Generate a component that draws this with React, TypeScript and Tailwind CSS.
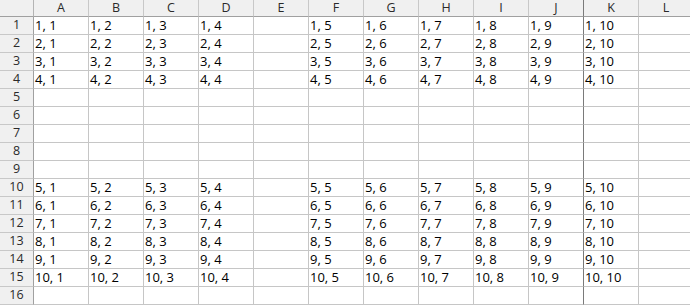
import React from "react";

const cols = ["A", "B", "C", "D", "E", "F", "G", "H", "I", "J", "K", "L"];

function cellText(r: number, c: number): string {
  let dataRow = 0;
  if (r >= 1 && r <= 4) dataRow = r;
  else if (r >= 10 && r <= 15) dataRow = r - 5;
  else return "";
  if (c === 4 || c === 11) return "";
  const colNum = c < 4 ? c + 1 : c;
  return `${dataRow}, ${colNum}`;
}

export default function App() {
  const rows = Array.from({ length: 16 }, (_, i) => i + 1);
  return (
    <div
      className="w-[690px] h-[307px] overflow-hidden bg-white text-black"
      style={{ fontFamily: '"Open Sans", "Noto Sans", sans-serif' }}
    >
      <div className="grid grid-cols-[34px_repeat(12,55px)] w-max">
        <div className="h-[17px] bg-[#f0f0f0] border-r border-b border-r-[#b4b4b4] border-b-[#a0a0a0] box-border" />
        {cols.map((c, i) => (
          <div
            key={c}
            className={`h-[17px] bg-[#f0f0f0] border-b border-b-[#a0a0a0] box-border flex items-center justify-center text-[12.5px] leading-none text-[#2a2a2a] ${
              i === 9 ? "border-r border-r-[#7a7a7a]" : "border-r border-r-[#c8c8c8]"
            }`}
          >
            {c}
          </div>
        ))}
        {rows.map((r) => (
          <React.Fragment key={r}>
            <div className="h-[18px] bg-[#f0f0f0] border-r border-b border-r-[#a0a0a0] border-b-[#c8c8c8] box-border flex items-center justify-center text-[12.5px] leading-none text-[#2a2a2a]">
              {r}
            </div>
            {cols.map((c, i) => (
              <div
                key={c}
                className={`h-[18px] border-b border-b-[#c6c6c6] box-border pl-[1px] flex items-center text-[13px] leading-none whitespace-nowrap overflow-hidden ${
                  i === 9 ? "border-r border-r-[#7a7a7a]" : "border-r border-r-[#c6c6c6]"
                }`}
              >
                {cellText(r, i)}
              </div>
            ))}
          </React.Fragment>
        ))}
      </div>
    </div>
  );
}
